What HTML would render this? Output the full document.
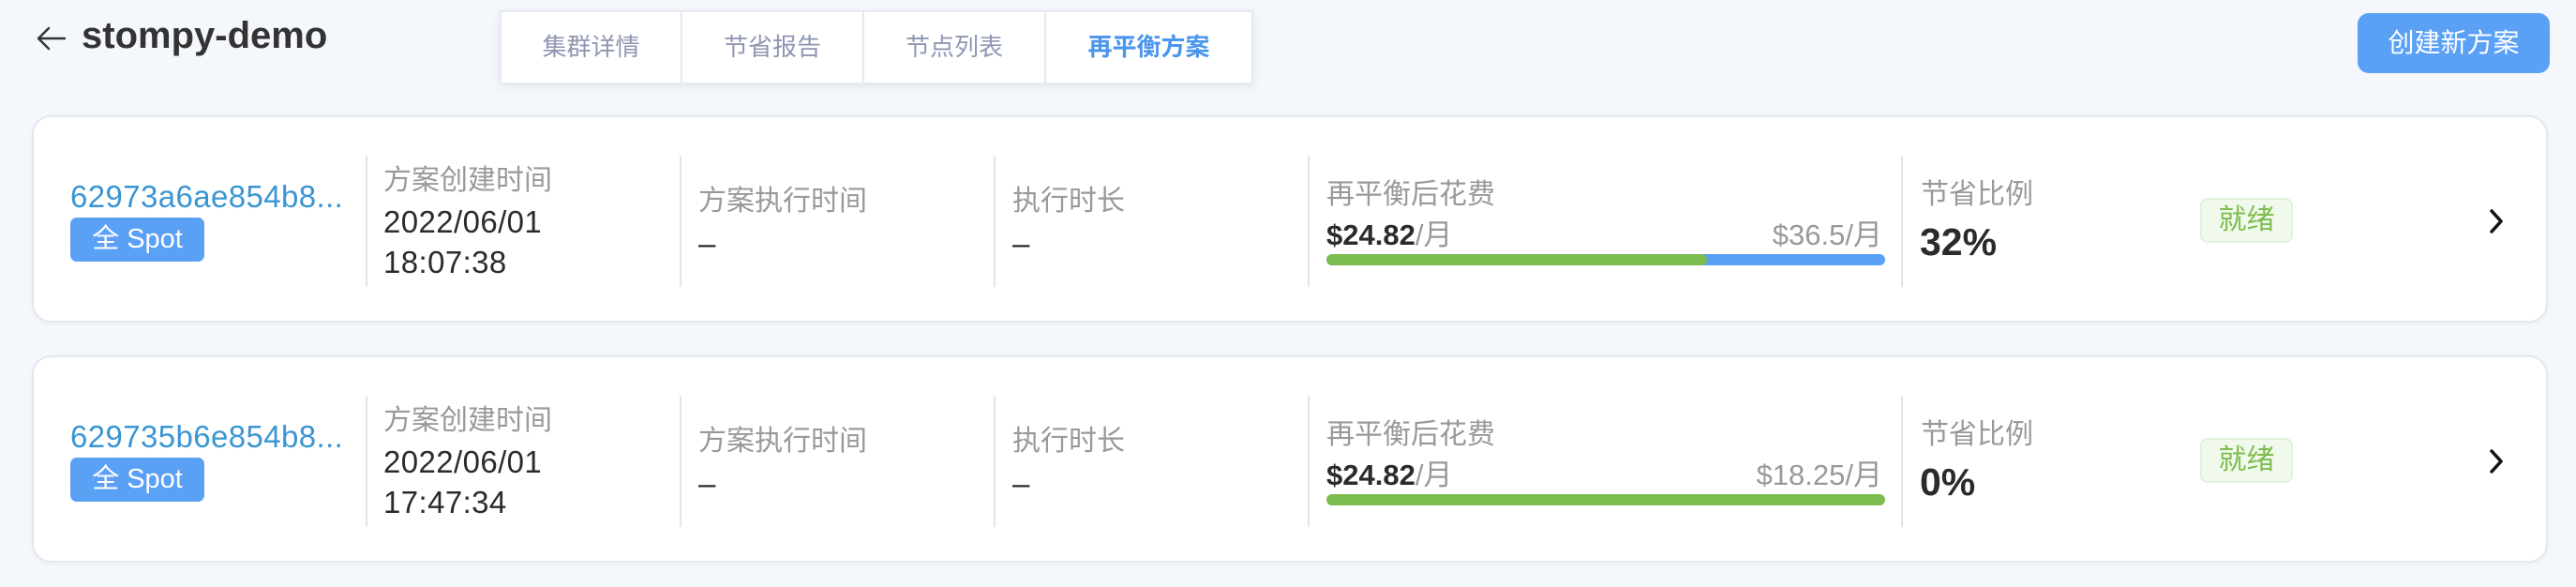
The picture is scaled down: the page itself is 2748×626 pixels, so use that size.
<!DOCTYPE html>
<html><head><meta charset="utf-8"><style>
*{margin:0;padding:0;box-sizing:border-box}
body{width:2748px;height:626px;background:#f4f7fb;font-family:"Liberation Sans","Noto Sans CJK SC",sans-serif;position:relative;overflow:hidden}
.a{position:absolute;white-space:nowrap}
.card{position:absolute;left:34px;width:2684px;height:221px;background:#fff;border:2px solid #e3e7ee;border-radius:20px;box-shadow:0 2px 6px rgba(0,0,0,.04)}
.div{position:absolute;top:41px;width:2px;height:140px;background:#e3e5ea}
.lbl{color:#999;font-size:30px;line-height:30px}
.val{color:#2b2b2b;font-size:33px;line-height:33px;letter-spacing:0.4px}
.tabs{position:absolute;left:533px;top:11px;width:804px;height:79px;background:#fff;border:2px solid #e6e9ef;box-shadow:0 3px 10px rgba(0,0,0,.07);display:flex}
.tab{height:75px;line-height:75px;text-align:center;color:#8f96b3;font-size:26px;border-right:2px solid #e6e8ee}
.id{font-size:33px;color:#3a95d2;letter-spacing:0.4px}
</style></head><body>
<svg class="a" style="left:38px;top:26px" width="34" height="30" viewBox="0 0 34 30"><path d="M14 4 L3 15 L14 26 M3 15 H31" fill="none" stroke="#333" stroke-width="2.4" stroke-linecap="round" stroke-linejoin="round"/></svg>
<div class="a" style="left:87px;top:16px;font-size:40px;font-weight:bold;color:#333">stompy-demo</div>
<div class="tabs">
<div class="tab" style="width:193px">集群详情</div>
<div class="tab" style="width:194px">节省报告</div>
<div class="tab" style="width:194px">节点列表</div>
<div class="tab" style="width:219px;border:none;color:#4a95ee;font-weight:bold">再平衡方案</div>
</div>
<div class="a" style="left:2515px;top:14px;width:205px;height:64px;background:#5aa0f5;border-radius:12px;color:#fff;font-size:28px;line-height:64px;text-align:center">创建新方案</div>

<div class="card" style="top:123px">
 <div class="a id" style="left:39px;top:66px">62973a6ae854b8...</div>
 <div class="a" style="left:39px;top:107px;width:143px;height:47px;background:#5aa0f5;border-radius:7px;color:#fff;font-size:29px;line-height:47px;text-align:center">全 Spot</div>
 <div class="div" style="left:354px"></div>
 <div class="a lbl" style="left:373px;top:53px">方案创建时间</div>
 <div class="a val" style="left:373px;top:95px">2022/06/01</div>
 <div class="a val" style="left:373px;top:138px">18:07:38</div>
 <div class="div" style="left:689px"></div>
 <div class="a lbl" style="left:709px;top:75px">方案执行时间</div>
 <div class="a val" style="left:709px;top:118px">–</div>
 <div class="div" style="left:1024px"></div>
 <div class="a lbl" style="left:1044px;top:75px">执行时长</div>
 <div class="a val" style="left:1044px;top:118px">–</div>
 <div class="div" style="left:1359px"></div>
 <div class="a lbl" style="left:1379px;top:68px">再平衡后花费</div>
 <div class="a" style="left:1379px;top:110px;font-size:31px;line-height:31px"><b style="color:#2b2b2b">$24.82</b><span style="color:#999">/月</span></div>
 <div class="a" style="right:708px;top:110px;font-size:31px;line-height:31px;color:#999">$36.5/月</div>
 <div class="a" style="left:1379px;top:146px;width:596px;height:12px;border-radius:6px;background:#5aa0f5;overflow:hidden"><div style="width:406px;height:12px;border-radius:6px;background:#7dbd4f"></div></div>
 <div class="div" style="left:1992px"></div>
 <div class="a lbl" style="left:2013px;top:68px">节省比例</div>
 <div class="a" style="left:2012px;top:110px;font-size:41px;font-weight:bold;color:#2b2b2b">32%</div>
 <div class="a" style="left:2311px;top:86px;width:99px;height:48px;background:#f0f9eb;border:2px solid #e1f3d8;border-radius:8px;color:#7dbd4f;font-size:30px;line-height:44px;text-align:center">就绪</div>
 <svg class="a" style="left:2618px;top:97px" width="18" height="28" viewBox="0 0 18 28"><path d="M4 3 L14 14 L4 25" fill="none" stroke="#111" stroke-width="3.5" stroke-linecap="round" stroke-linejoin="round"/></svg>
</div>

<div class="card" style="top:379px">
 <div class="a id" style="left:39px;top:66px">629735b6e854b8...</div>
 <div class="a" style="left:39px;top:107px;width:143px;height:47px;background:#5aa0f5;border-radius:7px;color:#fff;font-size:29px;line-height:47px;text-align:center">全 Spot</div>
 <div class="div" style="left:354px"></div>
 <div class="a lbl" style="left:373px;top:53px">方案创建时间</div>
 <div class="a val" style="left:373px;top:95px">2022/06/01</div>
 <div class="a val" style="left:373px;top:138px">17:47:34</div>
 <div class="div" style="left:689px"></div>
 <div class="a lbl" style="left:709px;top:75px">方案执行时间</div>
 <div class="a val" style="left:709px;top:118px">–</div>
 <div class="div" style="left:1024px"></div>
 <div class="a lbl" style="left:1044px;top:75px">执行时长</div>
 <div class="a val" style="left:1044px;top:118px">–</div>
 <div class="div" style="left:1359px"></div>
 <div class="a lbl" style="left:1379px;top:68px">再平衡后花费</div>
 <div class="a" style="left:1379px;top:110px;font-size:31px;line-height:31px"><b style="color:#2b2b2b">$24.82</b><span style="color:#999">/月</span></div>
 <div class="a" style="right:708px;top:110px;font-size:31px;line-height:31px;color:#999">$18.25/月</div>
 <div class="a" style="left:1379px;top:146px;width:596px;height:12px;border-radius:6px;background:#7dbd4f"></div>
 <div class="div" style="left:1992px"></div>
 <div class="a lbl" style="left:2013px;top:68px">节省比例</div>
 <div class="a" style="left:2012px;top:110px;font-size:41px;font-weight:bold;color:#2b2b2b">0%</div>
 <div class="a" style="left:2311px;top:86px;width:99px;height:48px;background:#f0f9eb;border:2px solid #e1f3d8;border-radius:8px;color:#7dbd4f;font-size:30px;line-height:44px;text-align:center">就绪</div>
 <svg class="a" style="left:2618px;top:97px" width="18" height="28" viewBox="0 0 18 28"><path d="M4 3 L14 14 L4 25" fill="none" stroke="#111" stroke-width="3.5" stroke-linecap="round" stroke-linejoin="round"/></svg>
</div>
</body></html>
